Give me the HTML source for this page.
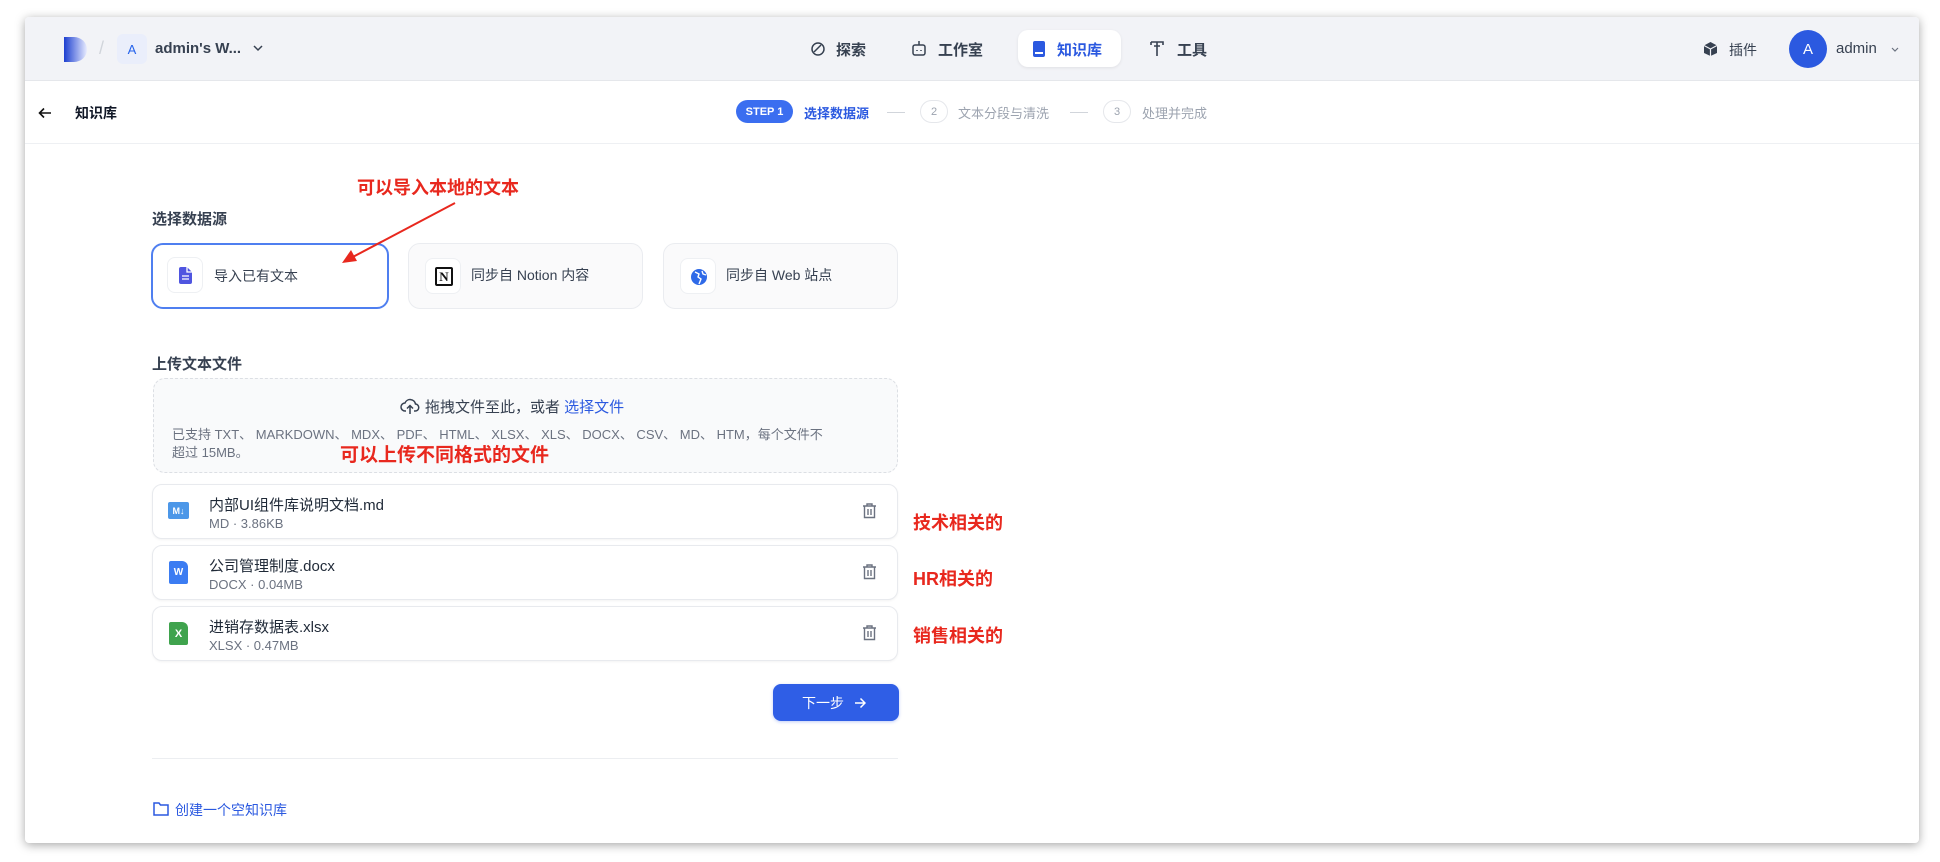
<!DOCTYPE html>
<html><head><meta charset="utf-8"><style>
*{box-sizing:border-box;margin:0;padding:0}
body{width:1940px;height:862px;background:#fff;font-family:"Liberation Sans","Noto Sans CJK SC",sans-serif;color:#1f2937;position:relative;overflow:hidden}
.win{position:absolute;left:25px;top:17px;width:1894px;height:826px;background:#fff;border-radius:4px;box-shadow:0 2px 10px rgba(0,0,0,.35);overflow:hidden}
.hdr{position:absolute;left:0;top:0;width:100%;height:64px;background:#f2f3f7;border-bottom:1px solid #e5e7eb}
.abs{position:absolute}
.t{position:absolute;white-space:nowrap}
.ctr{display:flex;align-items:center;justify-content:center}
.card{position:absolute;border:1px solid #eaecf0;border-radius:12px;background:#fafafb}
.ib{position:absolute;left:16px;top:14px;width:36px;height:36px;border:1px solid #eef0f3;border-radius:8px;background:#fff}
.file{position:absolute;left:127px;width:746px;height:55px;border:1px solid #e8eaee;border-radius:10px;background:#fff;box-shadow:0 1px 2px rgba(0,0,0,.05)}
.fn{position:absolute;left:56px;top:9px;font-size:15px;color:#1f2937}
.fs{position:absolute;left:56px;top:31px;font-size:13px;color:#6b7280}
.red{color:#e8281e;font-weight:bold;position:absolute;white-space:nowrap}
</style></head><body>
<div class="win">
<div class="hdr">
 <svg class="abs" style="left:39px;top:20px" width="24" height="25" viewBox="0 0 24 25"><defs><linearGradient id="g" x1="0" x2="1"><stop offset="0" stop-color="#1d3fd0"/><stop offset="1" stop-color="#e8ecff"/></linearGradient></defs><path d="M0 0H10A13 12.5 0 0 1 10 25H0Z" fill="url(#g)"/></svg>
 <div class="t" style="left:74px;top:21px;color:#d1d5db;font-size:18px">/</div>
 <div class="abs ctr" style="left:92px;top:17px;width:30px;height:30px;border-radius:6px;background:#eaeefb;color:#2563eb;font-size:13px">A</div>
 <div class="t" style="left:130px;top:23px;font-size:15px;font-weight:600;color:#374151">admin's W...</div>
 <svg class="abs" style="left:228px;top:28px" width="10" height="7" viewBox="0 0 10 7" fill="none" stroke="#374151" stroke-width="1.5"><path d="M1 1l4 4 4-4"/></svg>
 <svg class="abs" style="left:785px;top:24px" width="16" height="16" viewBox="0 0 16 16" fill="none" stroke="#374151" stroke-width="1.5"><circle cx="8" cy="8" r="6"/><path d="M4 11L11 4"/></svg>
 <div class="t" style="left:811px;top:22px;font-size:15px;font-weight:600;color:#374151">探索</div>
 <svg class="abs" style="left:886px;top:23px" width="16" height="17" viewBox="0 0 16 17" fill="none" stroke="#374151" stroke-width="1.5"><rect x="2" y="5" width="12" height="10" rx="2"/><path d="M8 1v4M6 10v1M10 10v1"/></svg>
 <div class="t" style="left:913px;top:22px;font-size:15px;font-weight:600;color:#374151">工作室</div>
 <div class="abs" style="left:993px;top:13px;width:103px;height:37px;border-radius:10px;background:#fff;box-shadow:0 1px 3px rgba(0,0,0,.08)"></div>
 <svg class="abs" style="left:1008px;top:24px" width="12" height="16" viewBox="0 0 12 16"><rect x="0" y="0" width="12" height="16" rx="2" fill="#2b59e0"/><rect x="2" y="11" width="8" height="2" fill="#fff"/></svg>
 <div class="t" style="left:1032px;top:22px;font-size:15px;font-weight:700;color:#2b59e0">知识库</div>
 <svg class="abs" style="left:1125px;top:24px" width="14" height="16" viewBox="0 0 14 16" fill="none" stroke="#374151" stroke-width="1.6"><path d="M1 1h12v3M1 1v3M7 1v14M4 5h6"/></svg>
 <div class="t" style="left:1152px;top:22px;font-size:15px;font-weight:600;color:#374151">工具</div>
 <svg class="abs" style="left:1678px;top:24px" width="15" height="16" viewBox="0 0 15 16"><path d="M7.5 1L14 4.5V12L7.5 15L1 12V4.5Z" fill="#374151"/><path d="M1 4.5L7.5 8L14 4.5M7.5 8V15" stroke="#f2f3f7" stroke-width="1.2" fill="none"/></svg>
 <div class="t" style="left:1704px;top:23px;font-size:14px;color:#374151">插件</div>
 <div class="abs ctr" style="left:1764px;top:13px;width:38px;height:38px;border-radius:50%;background:#2b59e0;color:#fff;font-size:15px">A</div>
 <div class="t" style="left:1811px;top:23px;font-size:15px;color:#374151">admin</div>
 <svg class="abs" style="left:1866px;top:30px" width="8" height="5" viewBox="0 0 8 5" fill="none" stroke="#6b7280" stroke-width="1.2"><path d="M1 1l3 3 3-3"/></svg>
</div>
<svg class="abs" style="left:13px;top:89px" width="14" height="14" viewBox="0 0 14 14" fill="none" stroke="#111" stroke-width="1.6"><path d="M13 7H2M6 2.5L1.5 7L6 11.5"/></svg>
<div class="t" style="left:50px;top:86px;font-size:14px;font-weight:700;color:#111827">知识库</div>
<div class="abs ctr" style="left:711px;top:83px;width:57px;height:23px;border-radius:12px;background:#3b6ef0;color:#fff;font-size:11px;font-weight:700">STEP 1</div>
<div class="t" style="left:779px;top:86px;font-size:13px;font-weight:600;color:#2b59e0">选择数据源</div>
<div class="abs" style="left:862px;top:95px;width:18px;height:1px;background:#d1d5db"></div>
<div class="abs ctr" style="left:895px;top:83px;width:28px;height:23px;border-radius:12px;border:1px solid #e5e7eb;color:#9ca3af;font-size:11px">2</div>
<div class="t" style="left:933px;top:86px;font-size:13px;color:#9ca3af">文本分段与清洗</div>
<div class="abs" style="left:1045px;top:95px;width:18px;height:1px;background:#d1d5db"></div>
<div class="abs ctr" style="left:1078px;top:83px;width:28px;height:23px;border-radius:12px;border:1px solid #e5e7eb;color:#9ca3af;font-size:11px">3</div>
<div class="t" style="left:1117px;top:86px;font-size:13px;color:#9ca3af">处理并完成</div>
<div class="abs" style="left:0;top:126px;width:100%;height:1px;background:#eef0f3"></div>

<div class="red" style="left:332px;top:157px;font-size:18px">可以导入本地的文本</div>
<div class="t" style="left:127px;top:191px;font-size:15px;font-weight:600;color:#374151">选择数据源</div>
<div class="card" style="left:126px;top:226px;width:238px;height:66px;border:2px solid #4f7ff0;background:#fff">
 <div class="ib" style="left:14px;top:12px"><svg style="position:absolute;left:11px;top:9px" width="13" height="17" viewBox="0 0 13 17"><path d="M0 2a2 2 0 0 1 2-2h6l5 5v10a2 2 0 0 1-2 2H2a2 2 0 0 1-2-2Z" fill="#4f55e0"/><path d="M3 9h7M3 12h7M8 0v5h5" stroke="#fff" stroke-width="1.3" fill="none"/></svg></div>
 <div class="t" style="left:61px;top:21px;font-size:14px;color:#374151">导入已有文本</div>
</div>
<div class="card" style="left:383px;top:226px;width:235px;height:66px">
 <div class="ib"><div style="position:absolute;left:9px;top:8px;width:18px;height:19px;border:2px solid #111;border-radius:2px;font:bold 13px 'Liberation Serif',serif;text-align:center;line-height:15px;color:#111">N</div></div>
 <div class="t" style="left:62px;top:21px;font-size:14px;color:#374151">同步自 Notion 内容</div>
</div>
<div class="card" style="left:638px;top:226px;width:235px;height:66px">
 <div class="ib"><svg style="position:absolute;left:9px;top:9px" width="18" height="18" viewBox="0 0 18 18"><circle cx="9" cy="9" r="8" fill="#2f6ae8"/><path d="M5 4l4 2-1 3 3 2-2 5M12 3l1 3 3 1" stroke="#fff" stroke-width="1.4" fill="none"/></svg></div>
 <div class="t" style="left:62px;top:21px;font-size:14px;color:#374151">同步自 Web 站点</div>
</div>
<svg class="abs" style="left:300px;top:180px" width="140" height="70"><path d="M130 6L24 62" stroke="#e8281e" stroke-width="2"/><path d="M17 66L26 53L32 64Z" fill="#e8281e"/></svg>

<div class="t" style="left:127px;top:336px;font-size:15px;font-weight:600;color:#374151">上传文本文件</div>
<div class="abs" style="left:128px;top:361px;width:745px;height:95px;border:1px dashed #dcdfe4;border-radius:12px;background:#f9fafb"></div>
<svg class="abs" style="left:375px;top:380px" width="20" height="18" viewBox="0 0 20 18" fill="none" stroke="#374151" stroke-width="1.5"><path d="M6 14H5a4 4 0 0 1 0-8 5.5 5.5 0 0 1 10.5 1A3.5 3.5 0 0 1 15 14h-1M10 17V9M7 11.5L10 8.5L13 11.5"/></svg>
<div class="t" style="left:400px;top:379px;font-size:15px;color:#374151">拖拽文件至此，或者 <span style="color:#2b59e0">选择文件</span></div>
<div class="t" style="left:147px;top:407px;font-size:13px;color:#6b7280">已支持 TXT、 MARKDOWN、 MDX、 PDF、 HTML、 XLSX、 XLS、 DOCX、 CSV、 MD、 HTM，每个文件不</div>
<div class="t" style="left:147px;top:425px;font-size:13px;color:#6b7280">超过 15MB。</div>
<div class="red" style="left:315px;top:423px;font-size:19px">可以上传不同格式的文件</div>

<div class="file" style="top:467px">
 <div class="abs ctr" style="left:15px;top:17px;width:21px;height:17px;background:#4c97e8;border-radius:2px;color:#fff;font-size:9px;font-weight:bold">M↓</div>
 <div class="fn">内部UI组件库说明文档.md</div><div class="fs">MD · 3.86KB</div>
</div>
<div class="file" style="top:528px">
 <div class="abs ctr" style="left:16px;top:15px;width:19px;height:23px;background:#3b7cf2;border-radius:2px 6px 2px 2px;color:#fff;font-size:10px;font-weight:bold">W</div>
 <div class="fn">公司管理制度.docx</div><div class="fs">DOCX · 0.04MB</div>
</div>
<div class="file" style="top:589px">
 <div class="abs ctr" style="left:16px;top:15px;width:19px;height:23px;background:#3fa34d;border-radius:2px 6px 2px 2px;color:#fff;font-size:11px;font-weight:bold">X</div>
 <div class="fn">进销存数据表.xlsx</div><div class="fs">XLSX · 0.47MB</div>
</div>
<svg class="abs" style="left:837px;top:486px" width="15" height="170" viewBox="0 0 15 170" fill="none" stroke="#6b7280" stroke-width="1.4">
 <g><path d="M1 3h13M5 3V1h5v2M2.5 3v11.5h10V3M6 6v6M9 6v6"/></g>
 <g transform="translate(0,61)"><path d="M1 3h13M5 3V1h5v2M2.5 3v11.5h10V3M6 6v6M9 6v6"/></g>
 <g transform="translate(0,122)"><path d="M1 3h13M5 3V1h5v2M2.5 3v11.5h10V3M6 6v6M9 6v6"/></g>
</svg>
<div class="red" style="left:888px;top:492px;font-size:18px">技术相关的</div>
<div class="red" style="left:888px;top:548px;font-size:18px">HR相关的</div>
<div class="red" style="left:888px;top:605px;font-size:18px">销售相关的</div>

<div class="abs" style="left:748px;top:667px;width:126px;height:37px;border-radius:8px;background:#2f5ee6;box-shadow:0 1px 3px rgba(47,94,230,.3)"></div>
<div class="t" style="left:777px;top:676px;font-size:14px;color:#fff">下一步</div>
<svg class="abs" style="left:829px;top:680px" width="12" height="12" viewBox="0 0 12 12" fill="none" stroke="#fff" stroke-width="1.5"><path d="M1 6h10M6.5 1.5L11 6L6.5 10.5"/></svg>
<div class="abs" style="left:127px;top:741px;width:746px;height:1px;background:#eceef1"></div>
<svg class="abs" style="left:128px;top:785px" width="16" height="14" viewBox="0 0 16 14" fill="none" stroke="#2b59e0" stroke-width="1.5"><path d="M1 1h5l1.5 2H15v10H1Z"/></svg>
<div class="t" style="left:150px;top:783px;font-size:14px;color:#2b59e0">创建一个空知识库</div>
</div>
</body></html>
